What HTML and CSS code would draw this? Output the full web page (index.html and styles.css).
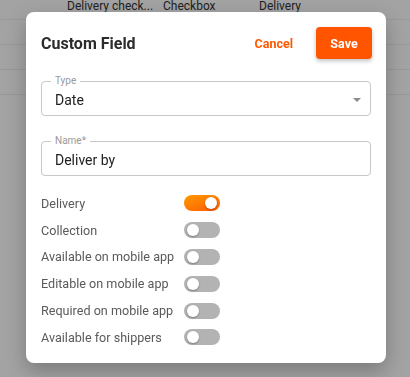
FILE: index.html
```html
<!DOCTYPE html>
<html lang="en">
<head>
  <meta charset="UTF-8" />
  <title>Custom Field</title>
  <link rel="stylesheet" href="styles.css">
</head>
<body>

  <!-- Tabla de fondo -->
  <div class="table">
    <div class="table-row table-head">
      <span>Delivery check...</span>
      <span>Checkbox</span>
      <span>Delivery</span>
    </div>
    <div class="table-row"></div>
    <div class="table-row"></div>
    <div class="table-row"></div>
  </div>

  <div class="overlay"></div>

  <!-- Dialogo -->
  <div class="dialog">
    <div class="dialog-header">
      <h2 class="dialog-title">Custom Field</h2>
      <div class="dialog-actions">
        <button class="btn-text">Cancel</button>
        <button class="btn-save">Save</button>
      </div>
    </div>

    <div class="field">
      <span class="field-label">Type</span>
      <span class="field-value">Date</span>
      <span class="field-arrow"></span>
    </div>

    <div class="field">
      <span class="field-label">Name*</span>
      <span class="field-value">Deliver by</span>
    </div>

    <div class="switch-list">
      <span class="switch-label">Delivery</span>
      <span class="switch on"></span>
      <span class="switch-label">Collection</span>
      <span class="switch"></span>
      <span class="switch-label">Available on mobile app</span>
      <span class="switch"></span>
      <span class="switch-label">Editable on mobile app</span>
      <span class="switch"></span>
      <span class="switch-label">Required on mobile app</span>
      <span class="switch"></span>
      <span class="switch-label">Available for shippers</span>
      <span class="switch"></span>
    </div>
  </div>

</body>
</html>
```

FILE: styles.css
```css
/* ================================
   Base
================================= */
* {
  margin: 0;
  padding: 0;
  box-sizing: border-box;
}

body {
  font-family: Roboto, "Liberation Sans", sans-serif;
  background: #fff;
  color: #333;
  min-height: 100vh;
  overflow: hidden;
  position: relative;
}

button {
  border: none;
  background: none;
  font-family: inherit;
  cursor: pointer;
}

/* ================================
   Tabla de fondo
================================= */
.table-row {
  height: 25px;
  border-bottom: 1px solid #eee;
  display: grid;
  grid-template-columns: 96px 96px 96px;
  padding-left: 67px;
}

.table-head {
  height: 20px;
  font-size: 12px;
  line-height: 12px;
  color: #333;
}

/* ================================
   Overlay + dialogo
================================= */
.overlay {
  position: fixed;
  inset: 0;
  background: rgba(0,0,0,0.36);
}

.dialog {
  position: absolute;
  top: 12px;
  left: 26px;
  width: 360px;
  height: 351px;
  background: #fff;
  border-radius: 8px;
  padding: 15px 15px 0;
  box-shadow: 0 8px 20px rgba(0,0,0,0.25);
}

.dialog-header {
  display: flex;
  align-items: center;
  justify-content: space-between;
  height: 32px;
  margin-bottom: 22px;
}

.dialog-title {
  font-size: 16px;
  font-weight: 700;
  color: #2b2b2b;
}

.dialog-actions {
  display: flex;
  align-items: center;
  gap: 23px;
  margin-right: -1px;
}

.btn-text {
  color: #ff5a00;
  font-size: 12.5px;
  font-weight: 700;
}

.btn-save {
  background: #ff5500;
  color: #fff;
  font-size: 12.5px;
  font-weight: 700;
  width: 56px;
  height: 32px;
  border-radius: 4px;
  box-shadow: 0 2px 4px rgba(0,0,0,0.25);
}

/* ================================
   Campos
================================= */
.field {
  position: relative;
  height: 35px;
  border: 1px solid #c8c8c8;
  border-radius: 4px;
  display: flex;
  align-items: center;
  padding: 2px 13px 0;
  margin-bottom: 25px;
}

.field-label {
  position: absolute;
  top: -7px;
  left: 9px;
  padding: 0 4px;
  background: #fff;
  font-size: 10px;
  line-height: 12px;
  color: #9a9a9a;
}

.field-value {
  font-size: 14px;
  color: #222;
}

.field-arrow {
  position: absolute;
  right: 9px;
  top: 16px;
  border-left: 4.5px solid transparent;
  border-right: 4.5px solid transparent;
  border-top: 4.5px solid #8a8a8a;
}

/* ================================
   Switches
================================= */
.switch-list {
  display: grid;
  grid-template-columns: 143px 36px;
  grid-auto-rows: 26.8px;
  align-items: center;
  margin-top: -11px;
}

.switch-label {
  font-size: 12.6px;
  color: #5a5a5a;
}

.switch {
  position: relative;
  width: 36px;
  height: 16px;
  border-radius: 8px;
  background: #b3b3b3;
}

.switch::after {
  content: "";
  position: absolute;
  top: 2px;
  left: 3px;
  width: 12px;
  height: 12px;
  border-radius: 50%;
  background: #fff;
  box-shadow: 0 1px 2px rgba(0,0,0,0.3);
}

.switch.on {
  background: linear-gradient(160deg, #ff9a00, #ff5a00);
}

.switch.on::after {
  left: 21px;
}
```
